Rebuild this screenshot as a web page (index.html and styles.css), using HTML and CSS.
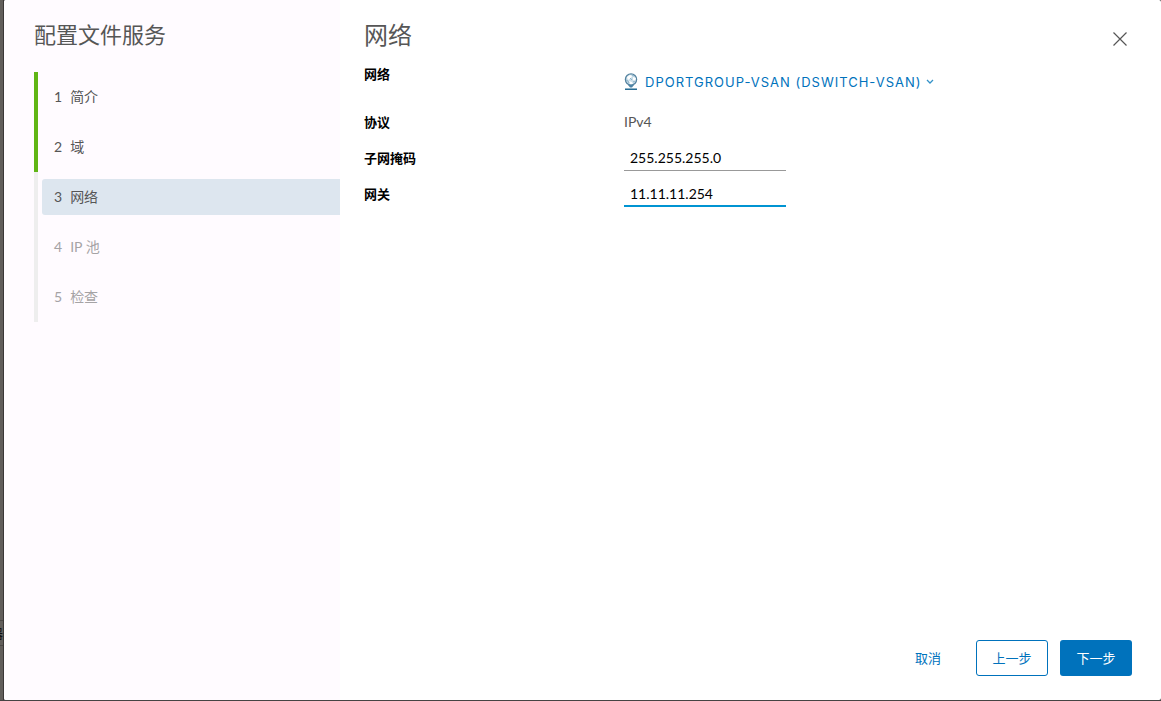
FILE: index.html
```html
<!DOCTYPE html>
<html lang="zh-CN">
<head>
<meta charset="utf-8">
<title>配置文件服务</title>
<meta name="viewport" content="width=device-width, initial-scale=1">
<link rel="stylesheet" href="styles.css">
</head>
<body>
<div class="page">
  <div class="backdrop" aria-hidden="true"><div class="backdrop-row"><span>器</span></div></div>
  <div class="wizard" role="dialog" aria-labelledby="wizard-title">
    <aside class="sidebar">
      <h1 class="title" id="wizard-title">配置文件服务</h1>
      <ol class="steps">
        <li class="step done"><button class="step-button" type="button"><span>1</span><span>简介</span></button></li>
        <li class="step done"><button class="step-button" type="button"><span>2</span><span>域</span></button></li>
        <li class="step current"><button class="step-button" type="button" aria-current="step"><span>3</span><span>网络</span></button></li>
        <li class="step"><button class="step-button" type="button" disabled><span>4</span><span>IP 池</span></button></li>
        <li class="step"><button class="step-button" type="button" disabled><span>5</span><span>检查</span></button></li>
      </ol>
    </aside>
    <main class="content">
      <header class="header">
        <h2 class="title">网络</h2>
        <button class="close" type="button" aria-label="关闭">
          <svg width="16" height="16" viewBox="0 0 16 16"><path d="M1.5 1.5l13 13M14.5 1.5l-13 13" fill="none" stroke="#565656" stroke-width="1.2"/></svg>
        </button>
      </header>
      <form class="form">
        <div class="field network">
          <span class="label">网络</span>
          <button class="picker" type="button" aria-haspopup="true">
            <svg class="globe" width="14" height="18" viewBox="0 0 14 18">
              <circle cx="7" cy="6.5" r="5.6" fill="#c9dde8" stroke="#5583a0" stroke-width="1.3"/>
              <path d="M3 4l3-2 2 1-1 2-3 2zM9 4l3 1-1 3-2-1zM5 8l3 1 1 2-3 0z" fill="#fff"/>
              <path d="M2 7l2 1 1 2M8 2l2 1M9 9l2-1M6 5l2 2" fill="none" stroke="#8eb3c9"/>
              <path d="M4 12h6l-2 2.500H6z" fill="#4c83a5"/>
              <path d="M1 15.500h12" stroke="#8db2c6"/>
              <path d="M1 16.500h12" stroke="#286b93"/>
            </svg>
            <span>DPORTGROUP-VSAN (DSWITCH-VSAN)</span>
            <svg width="8" height="6" viewBox="0 0 8 6"><path d="M1 1l3 3 3-3" fill="none" stroke="#3492c8" stroke-width="1.3"/></svg>
          </button>
        </div>
        <div class="field">
          <span class="label">协议</span>
          <span class="value">IPv4</span>
        </div>
        <div class="field">
          <label class="label" for="mask">子网掩码</label>
          <input class="input" id="mask" type="text" value="255.255.255.0">
        </div>
        <div class="field">
          <label class="label" for="gateway">网关</label>
          <input class="input active" id="gateway" type="text" value="11.11.11.254">
        </div>
      </form>
      <footer class="footer">
        <button class="button link" type="button">取消</button>
        <button class="button outline" type="button">上一步</button>
        <button class="button primary" type="button">下一步</button>
      </footer>
    </main>
  </div>
</div>
</body>
</html>
```
FILE: styles.css
```css
* { box-sizing: border-box; }

body {
  margin: 0;
  background: #454343;
  color: #565656;
  font: 14px/20px Lato, "Noto Sans CJK SC", sans-serif;
}

button, input { font: inherit; }

button {
  padding: 0;
  border: 0;
  background: none;
  color: inherit;
  cursor: pointer;
}

.page {
  display: flex;
  min-height: 100vh;
  padding-bottom: 1px;
}

.backdrop {
  display: flex;
  flex-direction: column;
  justify-content: flex-end;
  width: 4px;
  padding-bottom: 54px;
  border-right: 1px solid #3b3a37;
  background: #62615b;
  overflow: hidden;
}

.backdrop-row {
  display: flex;
  justify-content: flex-end;
  border-top: 1px solid #4c4b46;
  border-bottom: 1px solid #4c4b46;
  color: #111;
  font-size: 13px;
  line-height: 24px;
}

.wizard {
  display: flex;
  flex: 1;
  min-width: 0;
  border-radius: 2px;
  background: #fff;
  overflow: hidden;
}

.sidebar {
  flex: 0 0 336px;
  padding: 20px 0 20px 30px;
  background: linear-gradient(to right, #fff 6px, #fffbff 6px);
}

.title {
  margin: 0;
  font-size: 22px;
  font-weight: 400;
  line-height: 30px;
}

.steps {
  margin: 22px 0 0;
  padding: 0;
  list-style: none;
}

.step {
  display: flex;
  align-items: center;
  height: 50px;
  padding-left: 4px;
  border-left: 4px solid #eee;
}

.step.done { border-color: #60b515; }

.step-button {
  display: flex;
  flex: 1;
  gap: 8px;
  padding: 8px 12px;
  border-radius: 3px 0 0 3px;
  text-align: left;
}

.step.current .step-button { background: #dde6ef; }

.step-button:disabled {
  color: #a5a3a5;
  cursor: default;
}

.content {
  display: flex;
  flex: 1;
  flex-direction: column;
  min-width: 0;
  padding: 20px 29px 24px 24px;
}

.header {
  display: flex;
  justify-content: space-between;
}

.header .title { font-size: 24px; }

.close {
  display: flex;
  margin-top: 7px;
  padding: 4px;
  align-self: flex-start;
}

.form {
  display: flex;
  flex: 1;
  flex-direction: column;
}

.field {
  display: grid;
  grid-template-columns: 260px 1fr;
  align-items: center;
  justify-items: start;
  height: 36px;
}

.field.network {
  align-items: start;
  height: 53px;
  padding-top: 13px;
}

.label {
  color: #000;
  font-size: 13px;
  font-weight: 700;
}

.picker {
  display: flex;
  align-items: center;
  gap: 4px;
  height: 36px;
  color: #0072bc;
  font-family: Inter, sans-serif;
  font-size: 13px;
  letter-spacing: 1px;
  white-space: nowrap;
}

.globe { margin-right: 3px; }

.input {
  width: 162px;
  height: 26px;
  padding: 0 6px;
  border: 0;
  border-bottom: 1px solid #999;
  border-radius: 0;
  outline: 0;
  background: none;
  color: #000;
}

.input.active { border-bottom: 2px solid #0094d2; }

.footer {
  display: flex;
  justify-content: flex-end;
  gap: 12px;
}

.button {
  min-width: 72px;
  height: 36px;
  padding: 0 15px;
  border: 1px solid transparent;
  border-radius: 3px;
  color: #0072bc;
  font-size: 13px;
}

.outline { border-color: #0072bc; }

.primary {
  background: #0072bc;
  color: #fff;
}
```
